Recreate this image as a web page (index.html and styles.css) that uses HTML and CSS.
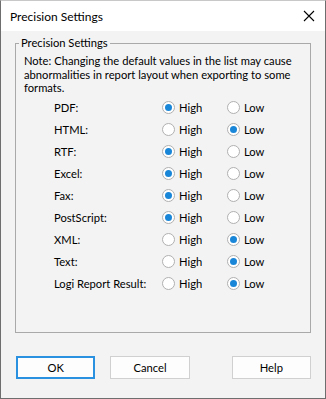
FILE: index.html
```
<!DOCTYPE html>
<html>
  <head>
    <title>Precision Settings</title>
    <link rel="stylesheet" href="styles.css">
  </head>
  <body>
    <div class="window">
      <div class="titlebar">
        <span class="title">Precision Settings</span>
        <svg class="close" width="12" height="12" viewBox="0 0 12 12">
          <path d="M1 1 L11 11 M11 1 L1 11" stroke="#000" stroke-width="1.1" fill="none" />
        </svg>
      </div>

      <div class="dialog-body">
        <fieldset class="group">
          <legend>Precision Settings</legend>
          <p class="note">Note: Changing the default values in the list may cause abnormalities in report layout when exporting to some formats.</p>

          <div class="rows">
            <div class="row">
              <span class="label">PDF:</span>
              <span class="option"><span class="radio checked"></span>High</span>
              <span class="option"><span class="radio"></span>Low</span>
            </div>
            <div class="row">
              <span class="label">HTML:</span>
              <span class="option"><span class="radio"></span>High</span>
              <span class="option"><span class="radio checked"></span>Low</span>
            </div>
            <div class="row">
              <span class="label">RTF:</span>
              <span class="option"><span class="radio checked"></span>High</span>
              <span class="option"><span class="radio"></span>Low</span>
            </div>
            <div class="row">
              <span class="label">Excel:</span>
              <span class="option"><span class="radio checked"></span>High</span>
              <span class="option"><span class="radio"></span>Low</span>
            </div>
            <div class="row">
              <span class="label">Fax:</span>
              <span class="option"><span class="radio checked"></span>High</span>
              <span class="option"><span class="radio"></span>Low</span>
            </div>
            <div class="row">
              <span class="label">PostScript:</span>
              <span class="option"><span class="radio checked"></span>High</span>
              <span class="option"><span class="radio"></span>Low</span>
            </div>
            <div class="row">
              <span class="label">XML:</span>
              <span class="option"><span class="radio"></span>High</span>
              <span class="option"><span class="radio checked"></span>Low</span>
            </div>
            <div class="row">
              <span class="label">Text:</span>
              <span class="option"><span class="radio"></span>High</span>
              <span class="option"><span class="radio checked"></span>Low</span>
            </div>
            <div class="row">
              <span class="label">Logi Report Result:</span>
              <span class="option"><span class="radio"></span>High</span>
              <span class="option"><span class="radio checked"></span>Low</span>
            </div>
          </div>
        </fieldset>

        <div class="buttons">
          <button class="button default">OK</button>
          <button class="button">Cancel</button>
          <button class="button help">Help</button>
        </div>
      </div>
    </div>
  </body>
</html>
```

FILE: styles.css
```
body {
  margin: 0;
  font-family: Lato, "Liberation Sans", sans-serif;
  font-size: 11.2px;
  color: #000;
}

.window {
  width: 326px;
  height: 399px;
  box-sizing: border-box;
  border: 1px solid #6e6e6e;
  border-top-color: #c8c8c8;
  background: #f3f3f3;
}

.titlebar {
  height: 30px;
  background: #fff;
  display: flex;
  align-items: center;
  justify-content: space-between;
  padding: 0 10px 0 9px;
}

.title {
  font-size: 12px;
}

.dialog-body {
  padding: 4px 14px 0 14px;
}

.group {
  margin: 0;
  height: 298px;
  box-sizing: border-box;
  border: 1px solid #a9a9a9;
  padding: 0 8px;
}

.group legend {
  margin-left: -5px;
  padding: 0 2px;
  line-height: 16px;
}

.note {
  margin: 3px 0 0 0;
  line-height: 13.5px;
}

.rows {
  margin-top: 2px;
  padding-left: 30px;
}

.row {
  display: flex;
  align-items: center;
  height: 22px;
}

.label {
  width: 108px;
}

.option {
  display: flex;
  align-items: center;
  width: 65px;
}

.radio {
  width: 11px;
  height: 11px;
  border: 1px solid #b0b0b0;
  border-radius: 50%;
  background: #fff;
  margin-right: 4px;
  display: flex;
  align-items: center;
  justify-content: center;
}

.radio.checked::after {
  content: "";
  width: 7px;
  height: 7px;
  border-radius: 50%;
  background: #1a86d8;
}

.buttons {
  display: flex;
  margin-top: 23px;
  padding-left: 1px;
}

.button {
  width: 80px;
  height: 23px;
  margin-right: 15px;
  font-family: inherit;
  font-size: 11.2px;
  background: #fdfdfd;
  border: 1px solid #d0d0d0;
  padding: 0;
}

.button.default {
  border: 2px solid #2a90e0;
}

.button.help {
  margin-left: 27px;
  margin-right: 0;
}
```
